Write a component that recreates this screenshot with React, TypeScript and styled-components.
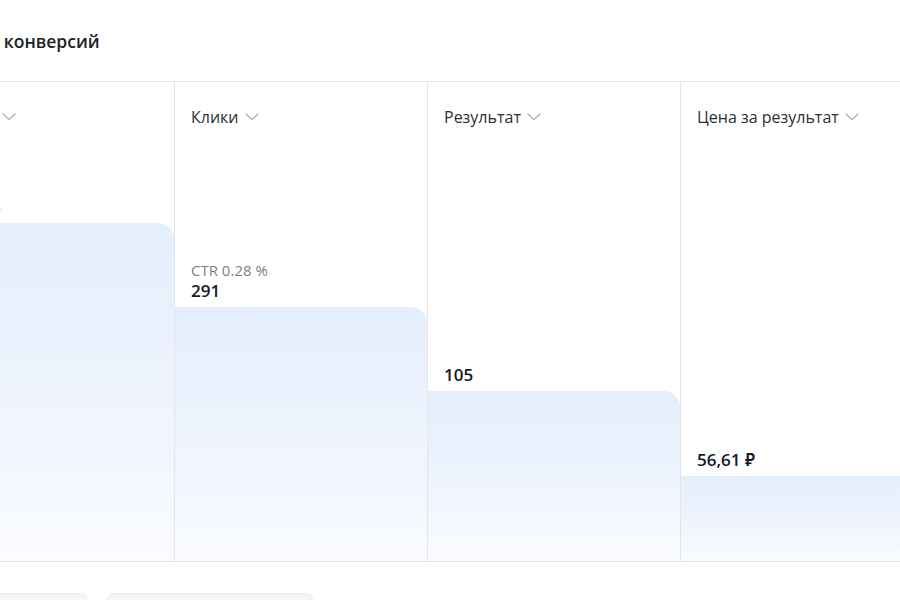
import React from "react";
import styled, { createGlobalStyle } from "styled-components";

const Global = createGlobalStyle`
  html, body { margin: 0; padding: 0; background: #ffffff; overflow: hidden; }
  body { font-family: "Open Sans", "Noto Sans", sans-serif; color: #1f2329; }
`;

const Page = styled.div`
  width: 1100px;
  margin-left: -78px;
  display: flex;
  flex-direction: column;
`;

const Title = styled.h2`
  margin: 0;
  height: 82px;
  box-sizing: border-box;
  padding: 29px 0 0 2px;
  font-size: 17.5px;
  line-height: 24px;
  font-weight: 600;
  color: #1c1f24;
  border-bottom: 1px solid #e2e5ea;
`;

const Funnel = styled.div`
  display: flex;
  height: 480px;
  box-sizing: border-box;
  border-bottom: 1px solid #e2e5ea;
`;

const Column = styled.div`
  width: 253px;
  flex: none;
  box-sizing: border-box;
  border-right: 1px solid #e2e6ec;
  display: flex;
  flex-direction: column;
`;

const Head = styled.div`
  display: flex;
  align-items: center;
  gap: 6px;
  padding: 24px 0 0 16px;
  font-size: 16px;
  line-height: 22px;
  color: #2b2f36;
`;

const Spacer = styled.div`
  flex: 1;
`;

const Meta = styled.div`
  padding-left: 16px;
  font-size: 15px;
  line-height: 19px;
  color: #7b8088;
`;

const Value = styled.div`
  padding: 0 0 5px 16px;
  font-size: 17px;
  line-height: 22px;
  font-weight: 600;
  color: #16191d;
`;

const Bar = styled.div<{ $h: number }>`
  height: ${(p) => p.$h}px;
  border-top-right-radius: 16px;
  background: linear-gradient(180deg, #e5eefc 0%, #edf3fd 45%, #f4f8fe 80%, #fbfcff 100%);
`;

const Footer = styled.div`
  display: flex;
  gap: 20px;
  padding: 31px 0 0 0;
`;

const Chip = styled.div<{ $w: number }>`
  width: ${(p) => p.$w}px;
  height: 32px;
  border-radius: 6px;
  background: #f4f5f7;
  border: 1px solid #eceef1;
`;

const Chevron = () => (
  <svg width="14" height="8" viewBox="0 0 14 8" fill="none">
    <path d="M1 1l6 5.5L13 1" stroke="#a7acb4" strokeWidth="1.2" strokeLinecap="round" strokeLinejoin="round" />
  </svg>
);

type Stage = { label: string; value: string; meta?: string; bar: number };

const stages: Stage[] = [
  { label: "Показы", value: "103 928", bar: 338 },
  { label: "Клики", value: "291", meta: "CTR 0.28 %", bar: 254 },
  { label: "Результат", value: "105", bar: 170 },
  { label: "Цена за результат", value: "56,61 ₽", bar: 85 },
];

export default function App() {
  return (
    <>
      <Global />
      <Page>
        <Title>Воронка конверсий</Title>
        <Funnel>
          {stages.map((s) => (
            <Column key={s.label}>
              <Head>
                <span>{s.label}</span>
                <Chevron />
              </Head>
              <Spacer />
              {s.meta && <Meta>{s.meta}</Meta>}
              <Value>{s.value}</Value>
              <Bar $h={s.bar} />
            </Column>
          ))}
        </Funnel>
        <Footer>
          <Chip $w={163} />
          <Chip $w={204} />
        </Footer>
      </Page>
    </>
  );
}
